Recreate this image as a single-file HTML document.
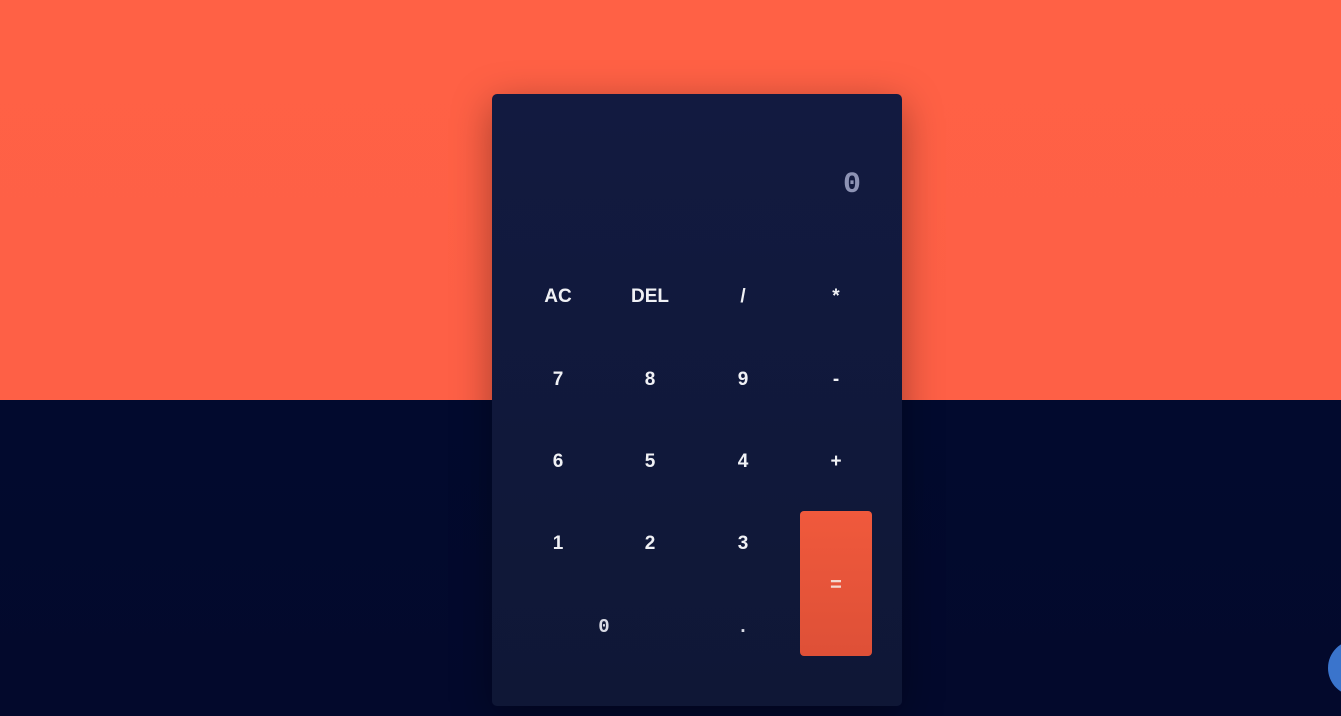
<!DOCTYPE html>
<html><head><meta charset="utf-8"><style>
html,body{margin:0;padding:0;width:1341px;height:716px;overflow:hidden}
body{background:linear-gradient(#ff6145 0,#fe6046 400px,#020a2e 400px,#03092c 716px);position:relative;font-family:"Liberation Sans",sans-serif}
.calc{position:absolute;left:492px;top:94px;width:410px;height:612px;background:linear-gradient(#121a40,#0f1736);border-radius:5px;box-shadow:0 10px 40px rgba(0,0,0,.35)}
.disp{position:absolute;right:480px;top:168px;color:#8d93b4;font:bold 30px "Liberation Mono",monospace;line-height:34px}
.k{position:absolute;color:#f0f1f5;font-size:19px;font-weight:bold;width:80px;margin-left:-40px;text-align:center;line-height:24px;margin-top:-11px}
.eq{position:absolute;left:800px;top:511px;width:72px;height:145px;background:linear-gradient(#f0593c,#de5037);border-radius:4px;color:#f3d8d0;font-size:20px;text-align:center;line-height:148px;font-weight:bold}
.m{font-family:"Liberation Mono",monospace;color:#d8dae4}
.blue{position:absolute;left:1328px;top:640px;width:56px;height:56px;border-radius:50%;background:#3a74cc}
</style></head><body>
<div class="calc"></div>
<div class="disp">0</div>
<div class="k" style="left:558px;top:296px">AC</div>
<div class="k" style="left:650px;top:296px">DEL</div>
<div class="k" style="left:743px;top:296px">/</div>
<div class="k" style="left:836px;top:296px">*</div>
<div class="k" style="left:558px;top:379px">7</div>
<div class="k" style="left:650px;top:379px">8</div>
<div class="k" style="left:743px;top:379px">9</div>
<div class="k" style="left:836px;top:379px">-</div>
<div class="k" style="left:558px;top:461px">6</div>
<div class="k" style="left:650px;top:461px">5</div>
<div class="k" style="left:743px;top:461px">4</div>
<div class="k" style="left:836px;top:461px">+</div>
<div class="k" style="left:558px;top:543px">1</div>
<div class="k" style="left:650px;top:543px">2</div>
<div class="k" style="left:743px;top:543px">3</div>
<div class="k m" style="left:604px;top:626px">0</div>
<div class="k m" style="left:743px;top:626px">.</div>
<div class="eq">=</div>
<div class="blue"></div>
</body></html>
